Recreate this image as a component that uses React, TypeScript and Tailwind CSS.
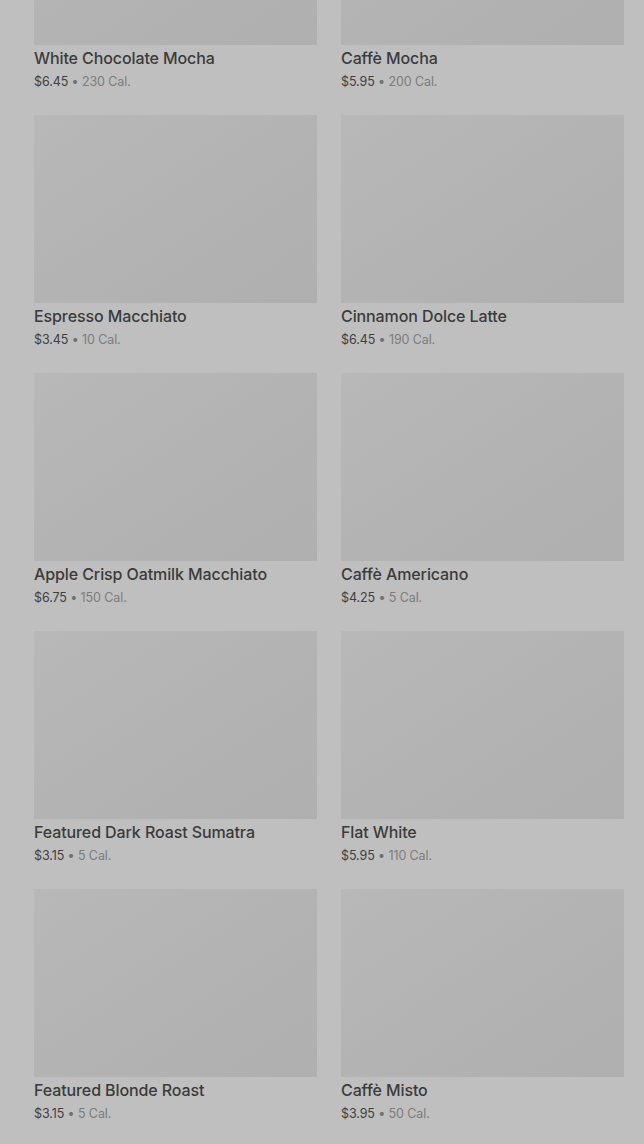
import React from 'react';

interface Drink {
  name: string;
  price: string;
  cal: string;
}

const drinks: Drink[] = [
  { name: 'White Chocolate Mocha', price: '$6.45', cal: '230 Cal.' },
  { name: 'Caffè Mocha', price: '$5.95', cal: '200 Cal.' },
  { name: 'Espresso Macchiato', price: '$3.45', cal: '10 Cal.' },
  { name: 'Cinnamon Dolce Latte', price: '$6.45', cal: '190 Cal.' },
  { name: 'Apple Crisp Oatmilk Macchiato', price: '$6.75', cal: '150 Cal.' },
  { name: 'Caffè Americano', price: '$4.25', cal: '5 Cal.' },
  { name: 'Featured Dark Roast Sumatra', price: '$3.15', cal: '5 Cal.' },
  { name: 'Flat White', price: '$5.95', cal: '110 Cal.' },
  { name: 'Featured Blonde Roast', price: '$3.15', cal: '5 Cal.' },
  { name: 'Caffè Misto', price: '$3.95', cal: '50 Cal.' },
];

function DrinkCard({ drink }: { drink: Drink }) {
  return (
    <div className="flex flex-col">
      <div className="h-[188px] w-full bg-gradient-to-br from-[#b8b8b8] via-[#b3b3b3] to-[#afafaf]" />
      <div className="mt-[2px] text-[16px] leading-[22px] font-medium tracking-[-0.1px] text-[#3b3b3b]">
        {drink.name}
      </div>
      <div className="mt-[3px] text-[12.5px] leading-[19px] tracking-[-0.1px]">
        <span className="text-[#404040]">{drink.price}</span>
        <span className="text-[#6f6f6f]"> • </span>
        <span className="text-[#7c7c7c]">{drink.cal}</span>
      </div>
    </div>
  );
}

export default function App() {
  return (
    <div
      className="h-[1144px] w-full overflow-hidden bg-[#bfbfbf]"
      style={{ fontFamily: 'Inter, "Noto Sans", sans-serif' }}
    >
      <div className="-mt-[143px] grid grid-cols-2 gap-x-[24px] gap-y-[24px] pl-[34px] pr-[20px]">
        {drinks.map((d) => (
          <DrinkCard key={d.name} drink={d} />
        ))}
      </div>
    </div>
  );
}
